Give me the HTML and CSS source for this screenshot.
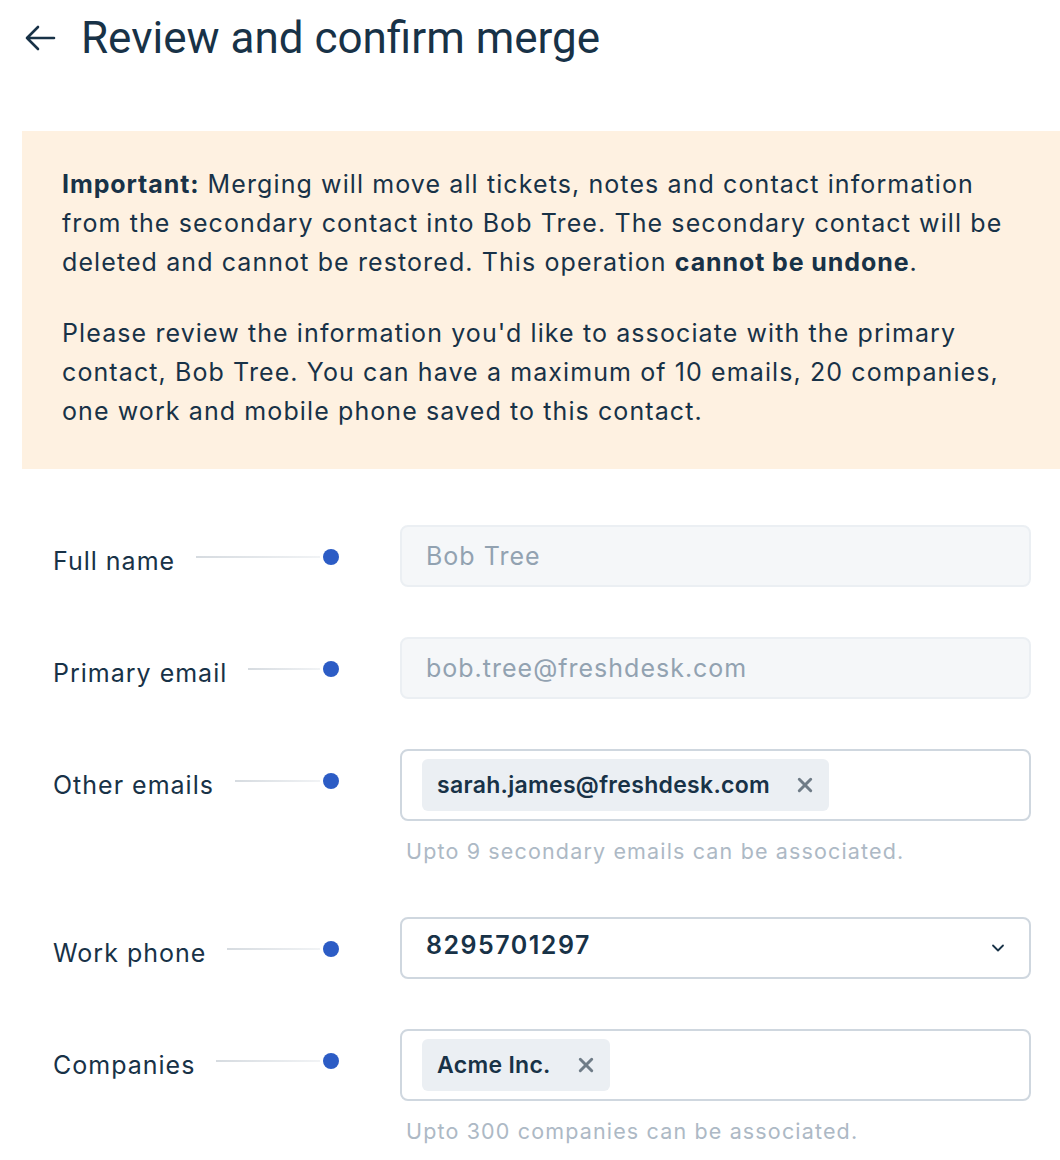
FILE: index.html
```html
<!DOCTYPE html>
<html lang="en">
<head>
<meta charset="utf-8">
<title>Review and confirm merge</title>
<link rel="stylesheet" href="styles.css">
</head>
<body>
<header class="header">
  <svg class="back" viewBox="0 0 32 32" width="32" height="32" aria-hidden="true">
    <path d="M30 16H3M14 5L3 16l11 11" fill="none" stroke="#183247" stroke-width="2.6" stroke-linecap="round" stroke-linejoin="round"/>
  </svg>
  <h1 class="title">Review and confirm merge</h1>
</header>

<section class="notice">
  <p><strong>Important:</strong> Merging will move all tickets, notes and contact information from the secondary contact into Bob Tree. The secondary contact will be deleted and cannot be restored. This operation <strong>cannot be undone</strong>.</p>
  <p>Please review the information you'd like to associate with the primary contact, Bob Tree. You can have a maximum of 10 emails, 20 companies, one work and mobile phone saved to this contact.</p>
</section>

<div class="form">
  <div class="row">
    <div class="label"><span class="label-text">Full name</span><span class="connector"></span><span class="dot"></span></div>
    <div class="field">
      <div class="input disabled">Bob Tree</div>
    </div>
  </div>
  <div class="row">
    <div class="label"><span class="label-text">Primary email</span><span class="connector"></span><span class="dot"></span></div>
    <div class="field">
      <div class="input disabled">bob.tree@freshdesk.com</div>
    </div>
  </div>
  <div class="row">
    <div class="label"><span class="label-text">Other emails</span><span class="connector"></span><span class="dot"></span></div>
    <div class="field">
      <div class="input tags">
        <span class="chip">sarah.james@freshdesk.com<svg class="x" viewBox="0 0 14 14" width="14" height="14"><path d="M2 2l10 10M12 2L2 12" stroke="#6f7c87" stroke-width="2.6" stroke-linecap="round"/></svg></span>
      </div>
      <div class="hint">Upto 9 secondary emails can be associated.</div>
    </div>
  </div>
  <div class="row">
    <div class="label"><span class="label-text">Work phone</span><span class="connector"></span><span class="dot"></span></div>
    <div class="field">
      <div class="input select"><span class="value">8295701297</span>
        <svg class="chev" viewBox="0 0 14 10" width="14" height="10"><path d="M2 2.5l5 5 5-5" fill="none" stroke="#183247" stroke-width="1.8" stroke-linecap="round" stroke-linejoin="round"/></svg>
      </div>
    </div>
  </div>
  <div class="row">
    <div class="label"><span class="label-text">Companies</span><span class="connector"></span><span class="dot"></span></div>
    <div class="field">
      <div class="input tags">
        <span class="chip">Acme Inc.<svg class="x" viewBox="0 0 14 14" width="14" height="14"><path d="M2 2l10 10M12 2L2 12" stroke="#6f7c87" stroke-width="2.6" stroke-linecap="round"/></svg></span>
      </div>
      <div class="hint">Upto 300 companies can be associated.</div>
    </div>
  </div>
</div>
</body>
</html>
```

FILE: styles.css
```css
* { box-sizing: border-box; }
html, body { margin: 0; padding: 0; background: #ffffff; }
body {
  font-family: Inter, "Noto Sans", "Liberation Sans", sans-serif;
  color: #183247;
  width: 1060px;
  overflow: hidden;
}
.header {
  display: flex;
  align-items: center;
  height: 131px;
  padding: 0 0 56px 24px;
}
.back { width: 32px; height: 32px; flex: none; }
.title {
  margin: 0 0 0 25px;
  font-family: Roboto, Inter, sans-serif;
  font-size: 44px;
  font-weight: 400;
  line-height: 1;
}
.notice {
  margin-left: 22px;
  background: #fef1e1;
  padding: 34px 40px 38px 40px;
  font-size: 25px;
  line-height: 39px;
  letter-spacing: 1.1px;
}
.notice p { margin: 0; }
.notice p + p { margin-top: 32px; }
.notice strong { font-weight: 700; letter-spacing: 0.9px; }

.form {
  padding: 56px 29px 0 53px;
  display: flex;
  flex-direction: column;
  gap: 50px;
}
.row {
  display: flex;
  align-items: flex-start;
}
.label {
  width: 347px;
  flex: none;
  display: flex;
  align-items: center;
  height: 62px;
  font-size: 25px;
  letter-spacing: 1px;
  padding-top: 10px;
}
.label-text { flex: none; }
.connector {
  flex: 1;
  height: 2px;
  margin: -8px 0 0 21px;
  background: linear-gradient(to right, #d6dbe0, #f1f3f5);
}
.dot {
  width: 16px;
  height: 16px;
  border-radius: 50%;
  background: #2c5cc5;
  flex: none;
  margin: -8px 61px 0 3px;
}
.field { flex: 1; }
.input {
  height: 62px;
  border: 2px solid #cfd7df;
  border-radius: 8px;
  display: flex;
  align-items: center;
  padding: 0 24px;
  font-size: 25px;
  letter-spacing: 1px;
  background: #fff;
}
.input.disabled {
  background: #f5f7f9;
  border-color: #ebeff3;
  color: #92a2b1;
}
.input.tags {
  height: 72px;
  padding: 0 20px;
}
.chip {
  display: inline-flex;
  align-items: center;
  height: 52px;
  background: #ebeff3;
  border-radius: 6px;
  padding: 0 16px 0 15px;
  font-size: 23px;
  font-weight: 600;
  letter-spacing: 0.3px;
  color: #183247;
}
.chip .x { margin-left: 27px; width: 16px; height: 16px; }
.input.select {
  justify-content: space-between;
  padding-right: 24px;
}
.select .value { font-weight: 600; font-size: 25px; letter-spacing: 1.5px; margin-top: -6px; }
.chev { width: 14px; height: 10px; }
.hint {
  margin-top: 17px;
  margin-bottom: 3px;
  padding-left: 6px;
  font-size: 21.5px;
  letter-spacing: 1.15px;
  color: #adb9c5;
}
```
